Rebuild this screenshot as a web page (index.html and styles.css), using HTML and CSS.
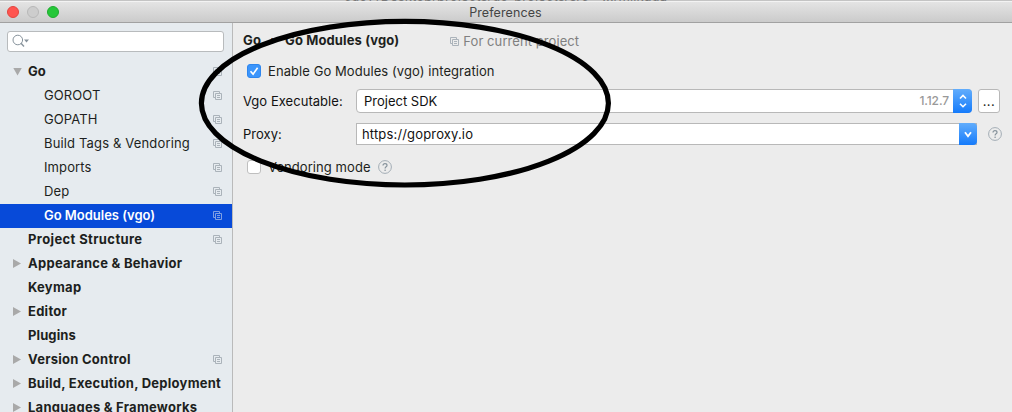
FILE: index.html
```html
<!DOCTYPE html>
<html lang="en">
<head>
<meta charset="utf-8">
<title>Preferences</title>
<link rel="stylesheet" href="styles.css">
</head>
<body>
<svg class="defs" width="0" height="0">
  <symbol id="copy" viewBox="0 0 9 9"><path d="M2 6.5H.5v-6h6V2M2.5 2.5h6v6h-6zM4 4.5h3M4 6.5h3" fill="none" stroke="currentColor"/></symbol>
  <symbol id="help" viewBox="0 0 14 14"><circle cx="7" cy="7" r="6.4" fill="none" stroke="#a3adb5"/><path d="M5 5.6C5 4.2 5.8 3.6 7 3.6s2 .7 2 1.8C9 6.8 7.1 6.8 7.1 8.4" fill="none" stroke="#87939c" stroke-width="1.2"/><circle cx="7.1" cy="10.3" r=".8" fill="#87939c"/></symbol>
</svg>
<div class="window">
  <div class="behind"><span>cuo1 /Desktop/projects/go-projects/src - .../milkdga</span></div>
  <header class="titlebar">
    <div class="lights"><i class="red"></i><i class="gray"></i><i class="green"></i></div>
    <span class="title">Preferences</span>
  </header>
  <div class="body">
    <aside class="sidebar">
      <div class="search"><svg width="18" height="14" viewBox="0 0 18 14"><circle cx="5.8" cy="6" r="4.8" fill="none" stroke="#87939c"/><path d="M9 9.2l3 3.3" stroke="#87939c" stroke-width="1.4"/><path d="M12 5.5h5l-2.5 3z" fill="#87939c"/></svg></div>
      <ul class="tree">
        <li class="top"><i class="arrow open"></i><span class="t-go">Go</span><svg class="copy"><use href="#copy"/></svg></li>
        <li><span>GOROOT</span><svg class="copy"><use href="#copy"/></svg></li>
        <li><span>GOPATH</span><svg class="copy"><use href="#copy"/></svg></li>
        <li><span class="t-tags">Build Tags &amp; Vendoring</span><svg class="copy"><use href="#copy"/></svg></li>
        <li><span>Imports</span><svg class="copy"><use href="#copy"/></svg></li>
        <li><span>Dep</span><svg class="copy"><use href="#copy"/></svg></li>
        <li class="selected"><span>Go Modules (vgo)</span><svg class="copy"><use href="#copy"/></svg></li>
        <li class="top"><i class="arrow none"></i><span class="t-struct">Project Structure</span><svg class="copy"><use href="#copy"/></svg></li>
        <li class="top"><i class="arrow"></i><span>Appearance &amp; Behavior</span></li>
        <li class="top"><i class="arrow none"></i><span>Keymap</span></li>
        <li class="top"><i class="arrow"></i><span>Editor</span></li>
        <li class="top"><i class="arrow none"></i><span class="t-short">Plugins</span></li>
        <li class="top"><i class="arrow"></i><span>Version Control</span><svg class="copy"><use href="#copy"/></svg></li>
        <li class="top"><i class="arrow"></i><span>Build, Execution, Deployment</span></li>
        <li class="top"><i class="arrow"></i><span>Languages &amp; Frameworks</span></li>
      </ul>
    </aside>
    <main class="content">
      <div class="crumbs"><b>Go</b><span class="sep">›</span><b>Go Modules (vgo)</b><svg class="copy"><use href="#copy"/></svg><span class="scope">For current project</span></div>
      <div class="check enable"><i class="box on"><svg width="14" height="14" viewBox="0 0 14 14"><path d="M3.5 7.2l2.6 2.9 4.5-6.4" fill="none" stroke="#fff" stroke-width="1.6"/></svg></i><span>Enable Go Modules (vgo) integration</span></div>
      <div class="row sdk"><label>Vgo Executable:</label>
        <div class="select"><span class="value">Project SDK</span><span class="version">1.12.7</span><i class="stepper"><svg width="18" height="22" viewBox="0 0 18 22"><path d="M6 8.5l3-3 3 3M6 13.7l3 3 3-3" fill="none" stroke="#fff" stroke-width="1.6"/></svg></i></div>
        <div class="more">...</div>
      </div>
      <div class="row proxy"><label>Proxy:</label>
        <div class="combo"><span class="value">https://goproxy.io</span><i class="stepper"><svg width="18" height="22" viewBox="0 0 18 22"><path d="M6 9.2l3 4 3-4" fill="none" stroke="#fff" stroke-width="1.8"/></svg></i></div>
        <svg class="help"><use href="#help"/></svg>
      </div>
      <div class="check vendor"><i class="box"></i><span>Vendoring mode</span><svg class="help"><use href="#help"/></svg></div>
    </main>
  </div>
  <svg class="marker" width="1012" height="412"><ellipse cx="404.9" cy="103.2" rx="203.5" ry="81.8" fill="none" stroke="#000" stroke-width="5.2"/></svg>
</div>
</body>
</html>
```
FILE: styles.css
```css
* { box-sizing: border-box; }
body { margin: 0; font: 13px/24px Inter, "Liberation Sans", sans-serif; color: #1d1f20; }
.defs { position: absolute; }
.window { position: relative; width: 1012px; height: 412px; overflow: hidden; background: #ececec; white-space: nowrap; }
.behind { height: 1px; overflow: hidden; background: #c4c4c4; padding-left: 344px; color: #777; }
.behind span { display: block; margin-top: -16px; letter-spacing: .1px; }
.titlebar { display: grid; grid-template-columns: 100px 1fr 101px; height: 22px; background: linear-gradient(#e4e4e4, #cbcbcb); border-top: 1px solid #f3f3f3; border-bottom: 1px solid #a1a1a1; }
.lights { display: flex; gap: 8px; padding: 4px 0 0 7px; }
.lights i { width: 12px; height: 12px; border-radius: 50%; border: 1px solid #e2463f; background: #ff5550; }
.lights .gray { border-color: #b8b8b8; background: #cdcdcd; }
.lights .green { border-color: #1eab2e; background: #25c739; }
.title { text-align: center; line-height: 21px; color: #454545; font-size: 12.5px; letter-spacing: .1px; }
.body { display: flex; height: 389px; }
.sidebar { width: 233px; background: #e6ebef; border-right: 1px solid #bababa; padding-top: 8px; }
.search { height: 21px; width: 217px; margin-left: 7px; background: #fff; border: 1px solid #b8bbbd; border-radius: 3px; padding: 2px 4px; }
.search svg { display: block; }
.tree { list-style: none; margin: 8px 0 0; padding: 0; }
.tree li { height: 24px; display: flex; align-items: center; padding: 0 10px 1px 44px; letter-spacing: .1px; }
.tree li span { padding-bottom: 1px; }
.tree .t-tags { letter-spacing: .15px; }
.tree .top { padding-left: 13px; font-weight: 700; letter-spacing: .26px; }
.tree .t-struct { letter-spacing: .38px; }
.tree .t-short { letter-spacing: .1px; }
.tree .t-go { letter-spacing: 0; }
.tree li .copy { margin-left: auto; }
.copy { width: 9px; height: 9px; color: #abb3ba; flex: none; }
.tree .selected { background: #074ad9; color: #fff; font-weight: 600; letter-spacing: -.02px; }
.selected .copy { color: #7e9fe3; }
.arrow { width: 8px; height: 9px; margin-right: 7px; background: #a9a9a9; clip-path: polygon(0 0, 100% 50%, 0 100%); }
.arrow.open { clip-path: polygon(0 0, 100% 0, 50% 100%); width: 9px; height: 8px; margin-right: 6px; }
.arrow.none { visibility: hidden; }
.content { flex: 1; padding: 5px 9px 0 10px; }
.crumbs { display: flex; align-items: center; height: 24px; }
.crumbs b { font-weight: 700; letter-spacing: .13px; }
.sep { width: 24px; text-align: center; }
.crumbs .copy { margin: 3px 4px 0 51px; }
.scope { color: #808080; padding-top: 2px; letter-spacing: .08px; }
.check { display: flex; align-items: center; height: 24px; padding-left: 4px; letter-spacing: .07px; }
.enable { margin-top: 7px; }
.box { width: 14px; height: 14px; margin-right: 7px; border: 1px solid #bfbfbf; border-radius: 3px; background: #fff; }
.box.on { background: #3c95fb; border-color: #2e86ee; }
.box svg { display: block; margin: -1px; }
.row { display: flex; align-items: center; }
.row label { width: 113px; color: #111; letter-spacing: .04px; }
.sdk { height: 24px; margin-top: 6px; }
.select, .combo { display: flex; align-items: center; background: #fff; border: 1px solid #b8b8b8; color: #111; }
.select { width: 616px; height: 24px; border-radius: 4px; padding-left: 7px; }
.version { margin-left: auto; margin-right: 4px; color: #999; font-size: 12px; font-weight: 500; letter-spacing: -.1px; }
.stepper { display: flex; width: 19px; background: linear-gradient(#62adfc, #157bfb); }
.stepper svg { margin: auto; }
.select .stepper { height: 24px; margin-right: -1px; border-radius: 0 4px 4px 0; }
.more { width: 22px; height: 24px; margin-left: 6px; border: 1px solid #b8b8b8; border-radius: 3px; background: #fff; text-align: center; line-height: 22px; letter-spacing: .5px; }
.proxy { height: 22px; margin-top: 10px; }
.combo { width: 621px; height: 22px; padding-left: 5px; letter-spacing: .16px; }
.combo .stepper { width: 18px; height: 22px; margin: 0 -1px 0 auto; border-radius: 0 4px 4px 0; }
.help { width: 14px; height: 14px; }
.proxy .help { margin-left: 11px; }
.vendor { margin-top: 10px; }
.vendor .help { margin-left: 7px; }
.marker { position: absolute; left: 0; top: 0; pointer-events: none; }
```
